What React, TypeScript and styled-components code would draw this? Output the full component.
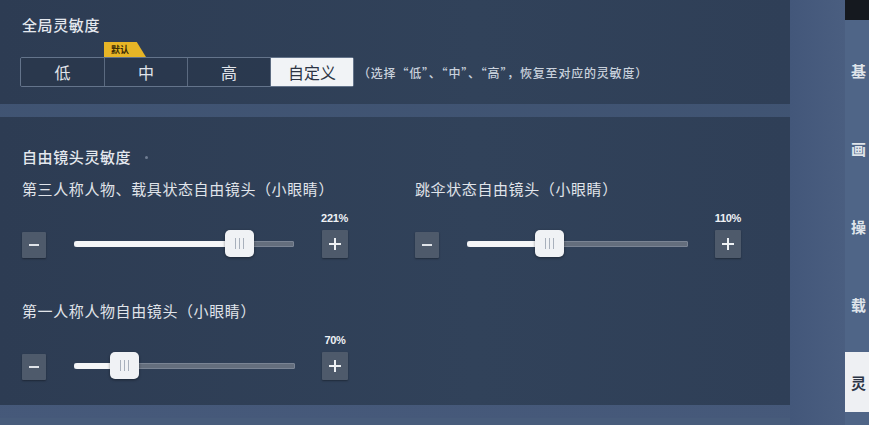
import React from "react";
import styled, { createGlobalStyle } from "styled-components";

const GlobalStyle = createGlobalStyle`
  html, body {
    margin: 0;
    padding: 0;
    overflow: hidden;
    background: #3f5372;
  }
  * { box-sizing: border-box; }
`;

const Screen = styled.div`
  width: 869px;
  height: 425px;
  display: flex;
  overflow: hidden;
  font-family: "Noto Sans CJK SC", "Noto Sans", sans-serif;
  color: #e2e6ec;
  background: linear-gradient(180deg, #3e5270 0%, #46597a 100%);
`;

const MainColumn = styled.div`
  width: 790px;
  flex-shrink: 0;
  display: flex;
  flex-direction: column;
  gap: 13px;
`;

const Panel = styled.section<{ $height: number; $top: number }>`
  height: ${(p) => p.$height}px;
  flex-shrink: 0;
  background: linear-gradient(90deg, #2d3c53 0%, #31425a 60%, #2f3f57 100%);
  padding: ${(p) => p.$top}px 22px 0 22px;
`;

const BottomBand = styled.div`
  flex: 1;
  background: #485c7b;
`;

const Strip = styled.div`
  width: 55px;
  flex-shrink: 0;
  background: linear-gradient(90deg, #43577a 0%, #4a5e80 100%);
`;

const SideMenu = styled.nav`
  width: 24px;
  flex-shrink: 0;
  display: flex;
  flex-direction: column;
  gap: 18px;
  background: #4f6587;
`;

const SideTop = styled.div`
  height: 20px;
  margin-bottom: 2px;
  background: #15191f;
`;

const SideItem = styled.div<{ $active?: boolean }>`
  height: 60px;
  display: flex;
  align-items: center;
  padding-left: 6px;
  font-size: 15px;
  font-weight: 700;
  white-space: nowrap;
  background: ${(p) => (p.$active ? "#eef0f3" : "transparent")};
  color: ${(p) => (p.$active ? "#2b3445" : "#dfe4ea")};
`;

const Title = styled.h2`
  margin: 0;
  font-size: 15px;
  font-weight: 500;
  line-height: 18px;
  letter-spacing: 0.6px;
  color: #e4e8ee;
  display: flex;
  align-items: center;
  gap: 14px;
`;

const Dot = styled.span`
  width: 3px;
  height: 3px;
  border-radius: 50%;
  background: #6f7d92;
`;

const PresetRow = styled.div`
  display: flex;
  align-items: center;
  margin-top: 23px;
  margin-left: -2px;
  gap: 4px;
`;

const Segments = styled.div`
  display: flex;
  border: 1px solid #64748b;
  border-radius: 2px;
`;

const Segment = styled.div<{ $active?: boolean }>`
  position: relative;
  width: 83px;
  height: 28px;
  display: flex;
  align-items: center;
  justify-content: center;
  font-size: 16px;
  border-left: 1px solid #5b6a80;
  background: ${(p) => (p.$active ? "#f1f3f6" : "rgba(40, 54, 74, 0.6)")};
  color: ${(p) => (p.$active ? "#2c3444" : "#e0e4ea")};

  &:first-child {
    border-left: none;
  }
`;

const Badge = styled.span`
  position: absolute;
  top: -16px;
  left: -1px;
  width: 42px;
  height: 15px;
  padding-left: 7px;
  font-size: 9px;
  line-height: 15px;
  font-weight: 700;
  color: #3a2a05;
  background: #e7b526;
  clip-path: polygon(0 0, 78% 0, 100% 100%, 0 100%);
`;

const Hint = styled.span`
  font-size: 12px;
  font-weight: 500;
  color: #c9d1dc;
  letter-spacing: 0.8px;
`;

const SliderGrid = styled.div`
  display: grid;
  grid-template-columns: 393px 1fr;
  row-gap: 44px;
  margin-top: 14px;
`;

const SliderBlock = styled.div`
  display: flex;
  flex-direction: column;
  gap: 14px;
`;

const SliderLabel = styled.div`
  font-size: 15px;
  line-height: 18px;
  letter-spacing: 0.6px;
  color: #e0e4ea;
  white-space: nowrap;
`;

const SliderRow = styled.div`
  width: 326px;
  display: flex;
  align-items: flex-end;
`;

const StepButton = styled.button<{ $size: number }>`
  width: ${(p) => p.$size}px;
  height: ${(p) => p.$size + 2}px;
  padding: 0;
  border: none;
  border-radius: 1px;
  background: #4e5a6b;
  box-shadow: 0 1px 2px rgba(0, 0, 0, 0.35);
  display: flex;
  align-items: center;
  justify-content: center;
  flex-shrink: 0;
`;

const Track = styled.div`
  position: relative;
  width: 221px;
  height: 28px;
  margin: 0 27px 0 28px;
  display: flex;
  align-items: center;
`;

const Rail = styled.div`
  width: 100%;
  height: 6px;
  border-radius: 1px;
  background: #646e7d;
  border: 1px solid #7a8494;
`;

const Fill = styled.div`
  position: absolute;
  left: 0;
  top: 11px;
  height: 6px;
  border-radius: 3px;
  background: #f5f6f8;
`;

const Thumb = styled.div`
  position: absolute;
  top: 0;
  width: 29px;
  height: 27px;
  margin-left: -14px;
  border-radius: 5px;
  background: #f0f2f5;
  box-shadow: 0 1px 3px rgba(0, 0, 0, 0.4);
  display: flex;
  align-items: center;
  justify-content: center;
  gap: 3px;
`;

const Grip = styled.span`
  width: 1px;
  height: 11px;
  background: #a8b0bc;
`;

const PlusColumn = styled.div`
  display: flex;
  flex-direction: column;
  align-items: center;
  gap: 6px;
`;

const Value = styled.span`
  font-family: "Liberation Sans", "Noto Sans", sans-serif;
  font-size: 11px;
  font-weight: 700;
  line-height: 12px;
  color: #eef1f5;
  letter-spacing: -0.3px;
`;

const Minus = () => (
  <svg width="12" height="12" viewBox="0 0 12 12">
    <rect x="1" y="5" width="10" height="2" fill="#dfe3e8" />
  </svg>
);

const Plus = () => (
  <svg width="14" height="14" viewBox="0 0 14 14">
    <rect x="1" y="6" width="12" height="2" fill="#eef1f4" />
    <rect x="6" y="1" width="2" height="12" fill="#eef1f4" />
  </svg>
);

interface SliderProps {
  label: string;
  value: string;
  ratio: number;
}

const Slider: React.FC<SliderProps> = ({ label, value, ratio }) => (
  <SliderBlock>
    <SliderLabel>{label}</SliderLabel>
    <SliderRow>
      <StepButton $size={24}>
        <Minus />
      </StepButton>
      <Track>
        <Rail />
        <Fill style={{ width: `${ratio * 100}%` }} />
        <Thumb style={{ left: `${ratio * 100}%` }}>
          <Grip />
          <Grip />
          <Grip />
        </Thumb>
      </Track>
      <PlusColumn>
        <Value>{value}</Value>
        <StepButton $size={26}>
          <Plus />
        </StepButton>
      </PlusColumn>
    </SliderRow>
  </SliderBlock>
);

const presets = ["低", "中", "高", "自定义"];
// the side tabs run off the right edge; only their first character shows
const sideItems = ["基", "画", "操", "载", "灵"];

export default function App() {
  return (
    <>
      <GlobalStyle />
      <Screen>
        <MainColumn>
          <Panel $height={104} $top={16}>
            <Title>全局灵敏度</Title>
            <PresetRow>
              <Segments>
                {presets.map((p) => (
                  <Segment key={p} $active={p === "自定义"}>
                    {p === "中" && <Badge>默认</Badge>}
                    {p}
                  </Segment>
                ))}
              </Segments>
              <Hint>（选择“低”、“中”、“高”，恢复至对应的灵敏度）</Hint>
            </PresetRow>
          </Panel>
          <Panel $height={288} $top={31}>
            <Title>
              自由镜头灵敏度
              <Dot />
            </Title>
            <SliderGrid>
              <Slider
                label="第三人称人物、载具状态自由镜头（小眼睛）"
                value="221%"
                ratio={0.75}
              />
              <Slider label="跳伞状态自由镜头（小眼睛）" value="110%" ratio={0.37} />
              <Slider label="第一人称人物自由镜头（小眼睛）" value="70%" ratio={0.226} />
            </SliderGrid>
          </Panel>
          <BottomBand />
        </MainColumn>
        <Strip />
        <SideMenu>
          <SideTop />
          {sideItems.map((s, i) => (
            <SideItem key={s} $active={i === sideItems.length - 1}>
              {s}
            </SideItem>
          ))}
        </SideMenu>
      </Screen>
    </>
  );
}
